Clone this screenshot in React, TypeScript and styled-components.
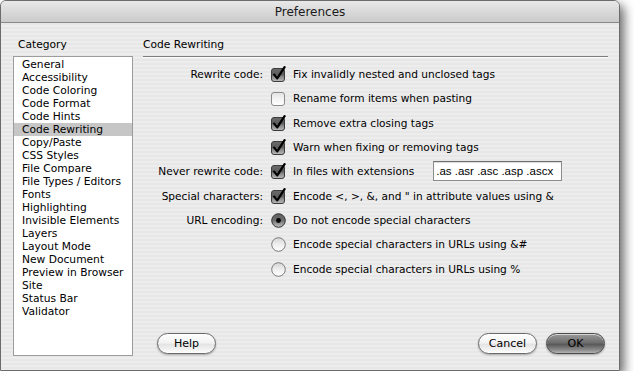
import React from "react";
import styled, { createGlobalStyle } from "styled-components";

const GlobalStyle = createGlobalStyle`
  html, body {
    margin: 0;
    padding: 0;
    background: #ffffff;
  }
  body {
    font-family: "DejaVu Sans", "Noto Sans", sans-serif;
    color: #000;
  }
`;

const Window = styled.div`
  width: 618px;
  height: 369px;
  border: 1px solid #6c6c6c;
  border-radius: 6px 6px 0 0;
  display: flex;
  flex-direction: column;
  overflow: hidden;
  background: repeating-linear-gradient(180deg, #ededed 0px, #ededed 2px, #e7e7e7 2px, #e7e7e7 4px);
  box-shadow: 4px 5px 11px rgba(0, 0, 0, 0.6);
`;

const TitleBar = styled.div`
  height: 21px;
  flex: none;
  display: flex;
  align-items: center;
  justify-content: center;
  background: linear-gradient(180deg, #e9e9e9 0%, #d9d9d9 50%, #cbcbcb 100%);
  border-bottom: 1px solid #8a8a8a;
`;

const Title = styled.span`
  font-size: 12px;
  color: #1a1a1a;
`;

const Body = styled.div`
  flex: 1;
  display: flex;
  gap: 10px;
  padding: 14px 11px 14px 12px;
  min-height: 0;
`;

const Sidebar = styled.div`
  width: 120px;
  display: flex;
  flex-direction: column;
`;

const SectionLabel = styled.div`
  font-size: 10.7px;
  line-height: 16px;
  padding-left: 5px;
  margin-bottom: 3px;
`;

const CategoryList = styled.ul`
  list-style: none;
  margin: 0;
  padding: 1px 0 0;
  flex: 1;
  background: #ffffff;
  border: 1px solid #9c9c9c;
`;

const CategoryItem = styled.li<{ $selected?: boolean }>`
  font-size: 10.7px;
  line-height: 13px;
  height: 13px;
  padding-left: 8px;
  white-space: nowrap;
  background: ${(p) => (p.$selected ? "#c6c6c6" : "transparent")};
`;

const MainPanel = styled.div`
  flex: 1;
  display: flex;
  flex-direction: column;
`;

const PanelHeader = styled.div`
  font-size: 10.7px;
  line-height: 16px;
  padding-bottom: 3px;
  border-bottom: 1px solid #7d7d7d;
  box-shadow: 0 1px 0 #fbfbfb;
  margin-bottom: 5px;
`;

const OptionGrid = styled.div`
  display: grid;
  grid-template-columns: 120px 1fr;
  grid-auto-rows: 24.3px;
  column-gap: 8px;
  font-size: 10.6px;
`;

const FieldLabel = styled.div`
  text-align: right;
  align-self: center;
  white-space: nowrap;
`;

const OptionRow = styled.div`
  grid-column: 2;
  display: flex;
  align-items: center;
  gap: 6px;
  white-space: nowrap;
`;

const ExtensionInput = styled.div`
  margin-left: 13px;
  width: 125px;
  height: 18px;
  border: 1px solid #8c8c8c;
  border-top-color: #6e6e6e;
  background: #ffffff;
  box-shadow: inset 0 1px 1px rgba(0, 0, 0, 0.15);
  font-family: "Liberation Sans", Arial, sans-serif;
  font-size: 11.5px;
  line-height: 18px;
  padding-left: 2px;
`;

const Footer = styled.div`
  margin-top: auto;
  display: flex;
  align-items: center;
  padding: 0 3px 2px 14px;
  gap: 9px;
`;

const Spacer = styled.div`
  flex: 1;
`;

const AquaButton = styled.button<{ $default?: boolean }>`
  width: 59px;
  height: 21px;
  border-radius: 11px;
  border: 1px solid ${(p) => (p.$default ? "#4a4a4a" : "#6a6a6a")};
  font-family: "DejaVu Sans", sans-serif;
  font-size: 11px;
  color: #000;
  padding: 0;
  background: ${(p) =>
    p.$default
      ? "linear-gradient(180deg, #9a9a9a 0%, #6e6e6e 45%, #5a5a5a 55%, #8e8e8e 85%, #b4b4b4 100%)"
      : "linear-gradient(180deg, #ffffff 0%, #f3f3f3 45%, #e4e4e4 55%, #f4f4f4 85%, #ffffff 100%)"};
  box-shadow: 0 1px 2px rgba(0, 0, 0, 0.3), inset 0 1px 0 rgba(255, 255, 255, 0.6);
`;

const IconBox = styled.svg`
  flex: none;
  display: block;
`;

function Checkbox({ checked }: { checked: boolean }) {
  return (
    <IconBox width="16" height="16" viewBox="0 0 16 16">
      <defs>
        <linearGradient id="cbOn" x1="0" y1="0" x2="0" y2="1">
          <stop offset="0" stopColor="#6a6a6a" />
          <stop offset="0.5" stopColor="#5c5c5c" />
          <stop offset="0.55" stopColor="#7c7c7c" />
          <stop offset="1" stopColor="#bdbdbd" />
        </linearGradient>
        <linearGradient id="cbOff" x1="0" y1="0" x2="0" y2="1">
          <stop offset="0" stopColor="#e2e2e2" />
          <stop offset="0.5" stopColor="#f4f4f4" />
          <stop offset="1" stopColor="#ffffff" />
        </linearGradient>
      </defs>
      <rect
        x="0.5"
        y="2.5"
        width="13"
        height="13"
        rx="2.5"
        fill={checked ? "url(#cbOn)" : "url(#cbOff)"}
        stroke={checked ? "#3c3c3c" : "#8a8a8a"}
      />
      {checked && (
        <path
          d="M3.2 8.6 L6.2 12.4 L13.6 1.2"
          fill="none"
          stroke="#000"
          strokeWidth="2.3"
          strokeLinecap="round"
          strokeLinejoin="round"
        />
      )}
    </IconBox>
  );
}

function Radio({ checked }: { checked: boolean }) {
  return (
    <IconBox width="16" height="16" viewBox="0 0 16 16">
      <defs>
        <linearGradient id="rdOn" x1="0" y1="0" x2="0" y2="1">
          <stop offset="0" stopColor="#5e5e5e" />
          <stop offset="0.5" stopColor="#6e6e6e" />
          <stop offset="1" stopColor="#c4c4c4" />
        </linearGradient>
        <linearGradient id="rdOff" x1="0" y1="0" x2="0" y2="1">
          <stop offset="0" stopColor="#d4d4d4" />
          <stop offset="0.5" stopColor="#efefef" />
          <stop offset="1" stopColor="#ffffff" />
        </linearGradient>
      </defs>
      <circle
        cx="7.5"
        cy="8.5"
        r="6.8"
        fill={checked ? "url(#rdOn)" : "url(#rdOff)"}
        stroke={checked ? "#333" : "#7a7a7a"}
      />
      {checked && <circle cx="7.5" cy="8.5" r="2.4" fill="#000" />}
    </IconBox>
  );
}

const categories = [
  "General",
  "Accessibility",
  "Code Coloring",
  "Code Format",
  "Code Hints",
  "Code Rewriting",
  "Copy/Paste",
  "CSS Styles",
  "File Compare",
  "File Types / Editors",
  "Fonts",
  "Highlighting",
  "Invisible Elements",
  "Layers",
  "Layout Mode",
  "New Document",
  "Preview in Browser",
  "Site",
  "Status Bar",
  "Validator",
];

export default function App() {
  return (
    <>
      <GlobalStyle />
      <Window>
        <TitleBar>
          <Title>Preferences</Title>
        </TitleBar>
        <Body>
          <Sidebar>
            <SectionLabel>Category</SectionLabel>
            <CategoryList>
              {categories.map((c) => (
                <CategoryItem key={c} $selected={c === "Code Rewriting"}>
                  {c}
                </CategoryItem>
              ))}
            </CategoryList>
          </Sidebar>
          <MainPanel>
            <PanelHeader>Code Rewriting</PanelHeader>
            <OptionGrid>
              <FieldLabel>Rewrite code:</FieldLabel>
              <OptionRow>
                <Checkbox checked />
                Fix invalidly nested and unclosed tags
              </OptionRow>
              <OptionRow>
                <Checkbox checked={false} />
                Rename form items when pasting
              </OptionRow>
              <OptionRow>
                <Checkbox checked />
                Remove extra closing tags
              </OptionRow>
              <OptionRow>
                <Checkbox checked />
                Warn when fixing or removing tags
              </OptionRow>

              <FieldLabel>Never rewrite code:</FieldLabel>
              <OptionRow>
                <Checkbox checked />
                In files with extensions
                <ExtensionInput>.as .asr .asc .asp .ascx</ExtensionInput>
              </OptionRow>

              <FieldLabel>Special characters:</FieldLabel>
              <OptionRow>
                <Checkbox checked />
                Encode &lt;, &gt;, &amp;, and " in attribute values using &amp;
              </OptionRow>

              <FieldLabel>URL encoding:</FieldLabel>
              <OptionRow>
                <Radio checked />
                Do not encode special characters
              </OptionRow>
              <OptionRow>
                <Radio checked={false} />
                Encode special characters in URLs using &amp;#
              </OptionRow>
              <OptionRow>
                <Radio checked={false} />
                Encode special characters in URLs using %
              </OptionRow>
            </OptionGrid>
            <Footer>
              <AquaButton>Help</AquaButton>
              <Spacer />
              <AquaButton>Cancel</AquaButton>
              <AquaButton $default>OK</AquaButton>
            </Footer>
          </MainPanel>
        </Body>
      </Window>
    </>
  );
}
